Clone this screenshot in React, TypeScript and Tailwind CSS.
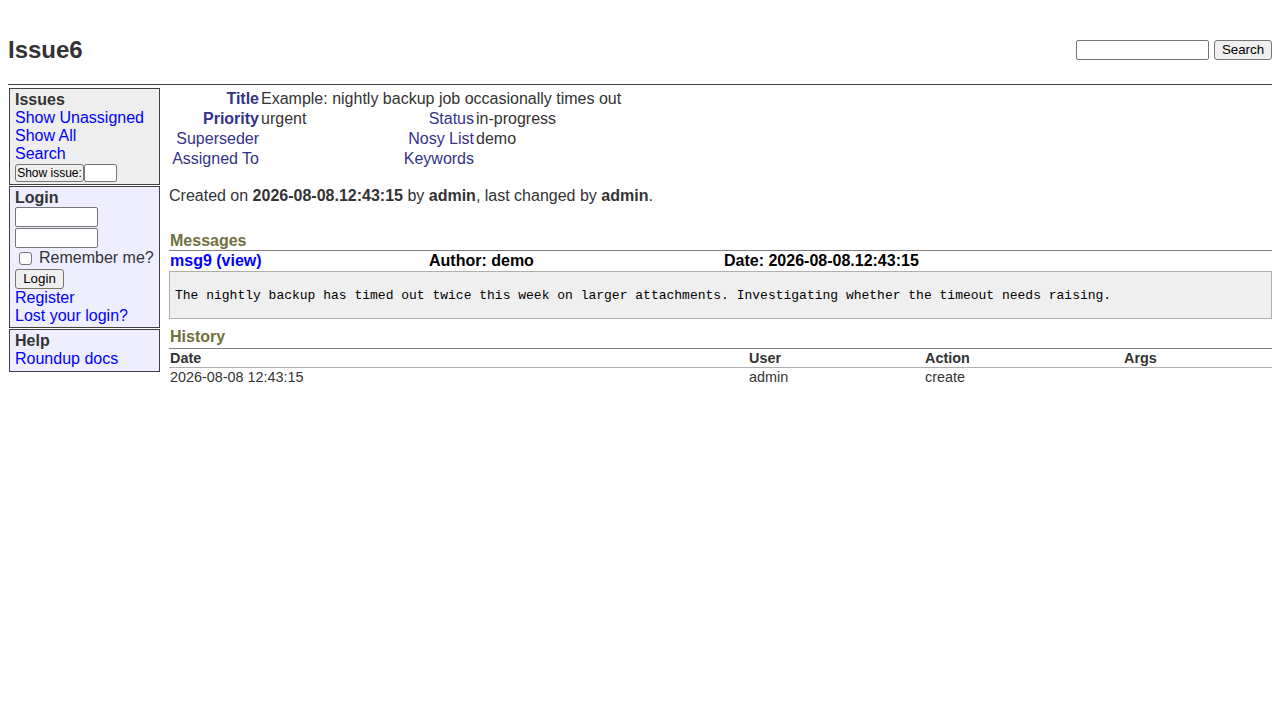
import React from "react";

const linkCls = "text-[#0000ff] no-underline";

function Sidebar() {
  return (
    <div className="ml-px flex w-[151px] shrink-0 flex-col gap-px">
      {/* Issues block */}
      <div className="border border-[#404040] bg-[#eeeeee] px-[5px] pt-[2px] pb-px">
        <div className="font-bold text-[#333]">Issues</div>
        <a href="#" className={`block ${linkCls}`}>Show Unassigned</a>
        <a href="#" className={`block ${linkCls}`}>Show All</a>
        <a href="#" className={`block ${linkCls}`}>Search</a>
        <div className="flex h-[20px] items-center">
          <button className="h-[18px] w-[69px] rounded-[3px] border border-[#767676] bg-[#efefef] px-px text-[12px] leading-[14px] text-black">
            Show issue:
          </button>
          <input className="h-[18px] w-[33px] rounded-[2px] border border-[#767676] bg-white" />
        </div>
      </div>

      {/* Login block */}
      <div className="border border-[#404040] bg-[#eeeeff] px-[5px] pt-[2px] pb-[2px]">
        <div className="font-bold text-[#333]">Login</div>
        <input className="block h-[20px] w-[83px] rounded-[2px] border border-[#767676] bg-white" />
        <input className="mt-px block h-[20px] w-[83px] rounded-[2px] border border-[#767676] bg-white" />
        <div className="flex h-[20px] items-center whitespace-nowrap">
          <span className="ml-[4px] mr-[7px] inline-block h-[13px] w-[13px] shrink-0 rounded-[3px] border border-[#767676] bg-white" />
          <span className="text-[#333]">Remember me?</span>
        </div>
        <button className="mt-px block h-[20px] w-[49px] rounded-[3px] border border-[#767676] bg-[#efefef] text-[13.33px] leading-[16px] text-black">
          Login
        </button>
        <a href="#" className={`block ${linkCls}`}>Register</a>
        <a href="#" className={`block ${linkCls}`}>Lost your login?</a>
      </div>

      {/* Help block */}
      <div className="border border-[#404040] bg-[#eeeeff] px-[5px] pt-[2px] pb-[3px]">
        <div className="font-bold text-[#333]">Help</div>
        <a href="#" className={`block ${linkCls}`}>Roundup docs</a>
      </div>
    </div>
  );
}

function FieldTable() {
  const lab = "pr-px text-right text-[#333388]";
  const val = "pl-px text-[#333]";
  return (
    <div className="grid grid-cols-[91px_142px_73px_1fr] grid-rows-[20px_20px_20px_20px] items-center pt-px">
      <div className={`${lab} font-bold`}>Title</div>
      <div className={`${val} col-span-3`}>Example: nightly backup job occasionally times out</div>

      <div className={`${lab} font-bold`}>Priority</div>
      <div className={val}>urgent</div>
      <div className={lab}>Status</div>
      <div className={val}>in-progress</div>

      <div className={lab}>Superseder</div>
      <div className={val}></div>
      <div className={lab}>Nosy List</div>
      <div className={val}>demo</div>

      <div className={lab}>Assigned To</div>
      <div className={val}></div>
      <div className={lab}>Keywords</div>
      <div className={val}></div>
    </div>
  );
}

function Messages() {
  return (
    <div className="mt-[17px]">
      <div className="border-b border-[#808080] pt-[10px] pl-px leading-[18px] font-bold text-[#707040]">
        Messages
      </div>
      <div className="grid grid-cols-[259px_295px_1fr] border-b border-[#afafaf] py-px leading-[18px] font-bold text-black">
        <div className="pl-px">
          <a href="#" className={linkCls}>msg9 (view)</a>
        </div>
        <div className="pl-px">Author: demo</div>
        <div className="pl-px">Date: 2026-08-08.12:43:15</div>
      </div>
      <div className="border-x border-b border-[#afafaf] bg-[#efefef] px-[5px] py-[2px] text-black">
        <pre className="mt-[14px] mb-[13px] font-['Liberation_Mono','Courier_New',monospace] text-[13px] leading-[15px]">
          The nightly backup has timed out twice this week on larger attachments. Investigating whether the timeout needs raising.
        </pre>
      </div>
    </div>
  );
}

function History() {
  return (
    <div>
      <div className="border-b border-[#808080] pt-[9px] pb-[2px] pl-px leading-[18px] font-bold text-[#707040]">
        History
      </div>
      <div className="grid grid-cols-[579px_176px_199px_1fr] border-b border-[#afafaf] pt-px text-[14.4px] leading-[17px] font-bold text-[#333]">
        <div className="pl-px">Date</div>
        <div className="pl-px">User</div>
        <div className="pl-px">Action</div>
        <div className="pl-px">Args</div>
      </div>
      <div className="grid grid-cols-[579px_176px_199px_1fr] py-px text-[14.4px] leading-[17px] text-[#333]">
        <div className="pl-px">2026-08-08 12:43:15</div>
        <div className="pl-px">admin</div>
        <div className="pl-px">create</div>
        <div className="pl-px"></div>
      </div>
    </div>
  );
}

export default function App() {
  return (
    <div className="min-h-[720px] bg-white px-2 font-['Liberation_Sans',Arial,Helvetica,sans-serif] text-[16px] leading-[18px] text-[#333]">
      <div className="flex items-center justify-between pt-[36px]">
        <h1 className="text-[24px] leading-[28px] font-bold text-[#333]">Issue6</h1>
        <div className="flex items-center gap-[5px]">
          <input className="h-[20px] w-[133px] rounded-[2px] border border-[#767676] bg-white" />
          <button className="h-[20px] w-[58px] rounded-[3px] border border-[#767676] bg-[#efefef] text-[13.33px] leading-[16px] text-black">
            Search
          </button>
        </div>
      </div>
      <div className="mt-[20px] border-t border-[#404040]" />
      <div className="mt-[3px] flex">
        <Sidebar />
        <div className="ml-[9px] min-w-0 flex-1">
          <FieldTable />
          <div className="mt-[18px]">
            Created on <b>2026-08-08.12:43:15</b> by <b>admin</b>, last changed by <b>admin</b>.
          </div>
          <Messages />
          <History />
        </div>
      </div>
    </div>
  );
}
